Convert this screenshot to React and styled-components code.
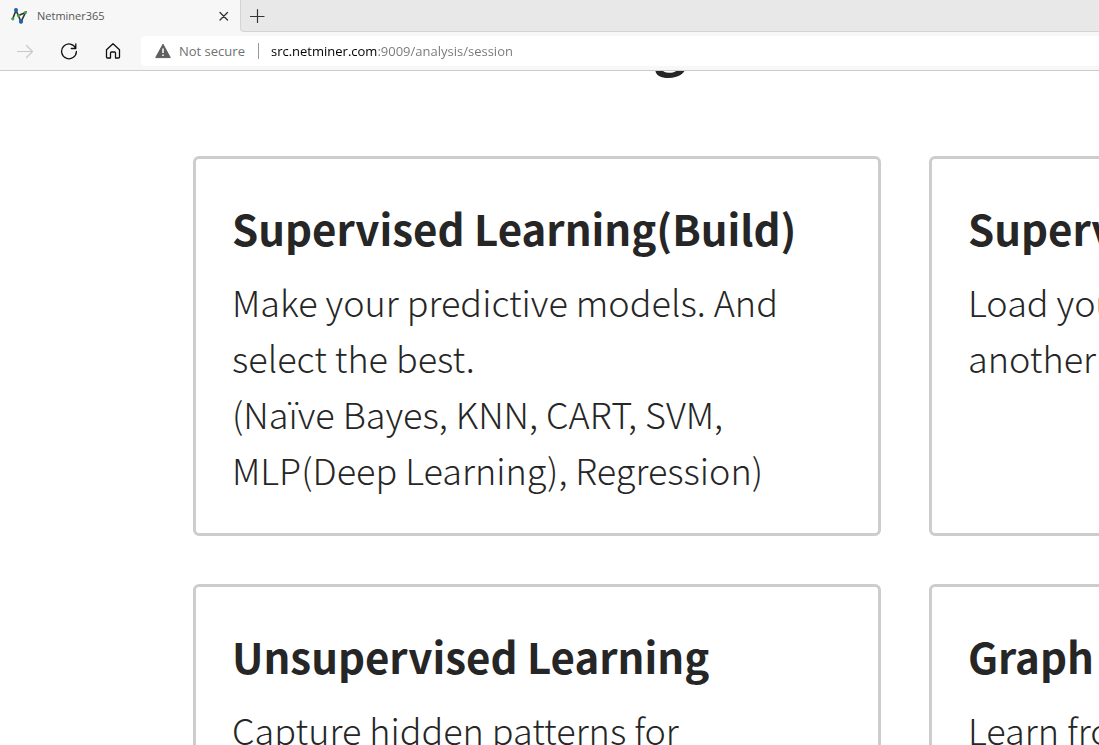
import React from "react";
import styled, { createGlobalStyle } from "styled-components";

const GlobalStyle = createGlobalStyle`
  * { box-sizing: border-box; }
  body { margin: 0; background: #fff; overflow: hidden; }
  button { border: 0; padding: 0; background: none; color: inherit; font: inherit; }
`;

const Window = styled.div`
  display: flex;
  flex-direction: column;
  height: 100vh;
  overflow: hidden;
  font-family: "Open Sans", "Noto Sans", sans-serif;
`;

const TabStrip = styled.div`
  display: flex;
  flex: none;
  height: 32px;
  background: #f7f7f7;
`;

const Tab = styled.div`
  display: flex;
  align-items: center;
  width: 240px;
  padding: 0 8px 0 11px;
  gap: 10px;
  background: #f7f7f7;
`;

const TabTitle = styled.span`
  flex: 1;
  font-size: 11px;
  line-height: 16px;
  color: #555;
`;

const StripRest = styled.div`
  display: flex;
  flex: 1;
  align-items: center;
  padding-left: 8px;
  background: #e8e8e8;
  border-left: 1px solid #d4d4d4;
  border-bottom: 1px solid #d4d4d4;
  border-bottom-left-radius: 4px;
`;

const IconButton = styled.button`
  display: grid;
  flex: none;
  place-items: center;
  width: ${(p) => p.$size}px;
  height: ${(p) => p.$size}px;
  color: ${(p) => p.$color || "#222"};
`;

const Toolbar = styled.div`
  display: flex;
  flex: none;
  align-items: center;
  height: 39px;
  padding: 0 0 1px 9px;
  background: #f7f7f7;
  border-bottom: 1px solid #ccc;
`;

const NavButtons = styled.div`
  display: flex;
  gap: 12px;
  margin-right: 12px;
`;

const AddressBar = styled.div`
  display: flex;
  flex: 1;
  align-items: center;
  min-width: 0;
  height: 30px;
  padding-left: 14px;
  background: #fff;
  border-radius: 4px 0 0 4px;
`;

const Security = styled.button`
  display: flex;
  flex: none;
  align-items: center;
  gap: 8px;
  font-size: 13px;
  line-height: 18px;
  color: #717171;
`;

const Divider = styled.span`
  flex: none;
  width: 1px;
  height: 16px;
  margin: 0 12px 0 13px;
  background: #999;
`;

const AddressInput = styled.input`
  flex: 1;
  min-width: 0;
  border: 0;
  padding: 0;
  outline: 0;
  font-family: inherit;
  font-size: 13px;
  line-height: 18px;
  color: #767676;
  background: linear-gradient(90deg, #000 106px, #767676 106px);
  background-clip: text;
  -webkit-text-fill-color: transparent;
`;

const Page = styled.main`
  flex: 1;
  min-height: 0;
  overflow: hidden;
  padding-left: 193px;
  font-family: "Noto Sans CJK KR", sans-serif;
  color: #262626;
`;

const HeadingClip = styled.header`
  display: flex;
  align-items: flex-end;
  height: 16px;
  padding: 0 0 11px 6px;
  margin-bottom: 69px;
  overflow: hidden;
`;

const Heading = styled.h1`
  margin: 0;
  font-size: 56px;
  font-weight: 700;
  line-height: 72px;
  white-space: nowrap;
`;

const Cards = styled.section`
  display: grid;
  grid-template-columns: repeat(2, minmax(688px, 1fr));
  gap: 48px;
`;

const Card = styled.article`
  min-height: 380px;
  padding: 36px;
  border: 3px solid #cdcdcd;
  border-radius: 6px;
`;

const CardTitle = styled.h2`
  margin: 0 0 12px;
  font-size: 42px;
  font-weight: 700;
  line-height: 66px;
`;

const CardText = styled.p`
  margin: 0;
  font-size: 36px;
  font-weight: 300;
  line-height: 56px;
`;

const cards = [
  {
    title: "Supervised Learning(Build)",
    lines: [
      "Make your predictive models. And",
      "select the best.",
      "(Naïve Bayes, KNN, CART, SVM,",
      "MLP(Deep Learning), Regression)",
    ],
  },
  {
    title: "Supervised Learning(Apply)",
    lines: ["Load your models and apply to", "another data."],
  },
  { title: "Unsupervised Learning", lines: ["Capture hidden patterns for", "your data."] },
  { title: "Graph Learning", lines: ["Learn from graph data."] },
];

const Logo = () => (
  <svg width="16" height="16" viewBox="0 0 16 16" aria-hidden="true">
    <path d="M1.8 10.8 5 2.2 10 13.8 14.5 4.5 7.5 7.5" fill="none" stroke="#333" strokeWidth="1.6" />
    <circle cx="1.8" cy="10.8" r="1.6" fill="#3fa648" />
    <circle cx="5" cy="2" r="2" fill="#1c62b5" />
    <circle cx="7.5" cy="7.6" r="1.6" fill="#3fa648" />
    <circle cx="10" cy="13.7" r="2.1" fill="#1c62b5" />
    <circle cx="14.3" cy="4.5" r="1.6" fill="#3fa648" />
  </svg>
);

const Stroke = ({ size, d, width = 1.2 }) => (
  <svg
    width={size}
    height={size}
    viewBox={`0 0 ${size} ${size}`}
    fill="none"
    stroke="currentColor"
    strokeWidth={width}
    strokeLinecap="round"
    strokeLinejoin="round"
    aria-hidden="true"
  >
    <path d={d} />
  </svg>
);

const Warning = () => (
  <svg width="16" height="16" viewBox="0 0 16 16" aria-hidden="true">
    <path d="M8 1.2 15.3 14.6H.7Z" fill="#5f5f5f" stroke="#5f5f5f" strokeWidth="1" strokeLinejoin="round" />
    <path d="M8 5.5V10M8 11.5V13" stroke="#fff" strokeWidth="1.5" />
  </svg>
);

export default function App() {
  return (
    <>
      <GlobalStyle />
      <Window>
        <TabStrip>
          <Tab>
            <Logo />
            <TabTitle>Netminer365</TabTitle>
            <IconButton $size={16} $color="#333" aria-label="Close tab">
              <Stroke size={10} d="M1 1.5 8.5 9M8.5 1.5 1 9" width={1.3} />
            </IconButton>
          </Tab>
          <StripRest>
            <IconButton $size={16} $color="#333" aria-label="New tab">
              <Stroke size={16} d="M8.5 1.5V14.5M1.5 8.5H15" />
            </IconButton>
          </StripRest>
        </TabStrip>
        <Toolbar>
          <NavButtons>
            <IconButton $size={32} $color="#c8c8c8" aria-label="Forward">
              <Stroke size={18} d="M1.5 9.5H16.5M10.5 3.5 16.5 9.5 10.5 15.5" />
            </IconButton>
            <IconButton $size={32} $color="#111" aria-label="Refresh">
              <Stroke size={18} d="M15.7 6.2A7.4 7.4 0 1 0 16.4 9.5M15.8 2V6.5H11.3" width={1.3} />
            </IconButton>
            <IconButton $size={32} $color="#111" aria-label="Home">
              <Stroke
                size={18}
                d="M2.5 7.7 9 1.7 15.5 7.7V15Q15.5 16 14.5 16H11.5V11Q11.5 10 10.5 10H7.5Q6.5 10 6.5 11V16H3.5Q2.5 16 2.5 15Z"
                width={1.3}
              />
            </IconButton>
          </NavButtons>
          <AddressBar>
            <Security>
              <Warning />
              <span>Not secure</span>
            </Security>
            <Divider />
            <AddressInput
              aria-label="Address"
              spellCheck={false}
              defaultValue="src.netminer.com:9009/analysis/session"
            />
          </AddressBar>
        </Toolbar>
        <Page>
          <HeadingClip>
            <Heading>Machine Learning</Heading>
          </HeadingClip>
          <Cards>
            {cards.map((card) => (
              <Card key={card.title}>
                <CardTitle>{card.title}</CardTitle>
                <CardText>
                  {card.lines.map((line, i) => (
                    <React.Fragment key={line}>
                      {i > 0 && <br />}
                      {line}
                    </React.Fragment>
                  ))}
                </CardText>
              </Card>
            ))}
          </Cards>
        </Page>
      </Window>
    </>
  );
}
